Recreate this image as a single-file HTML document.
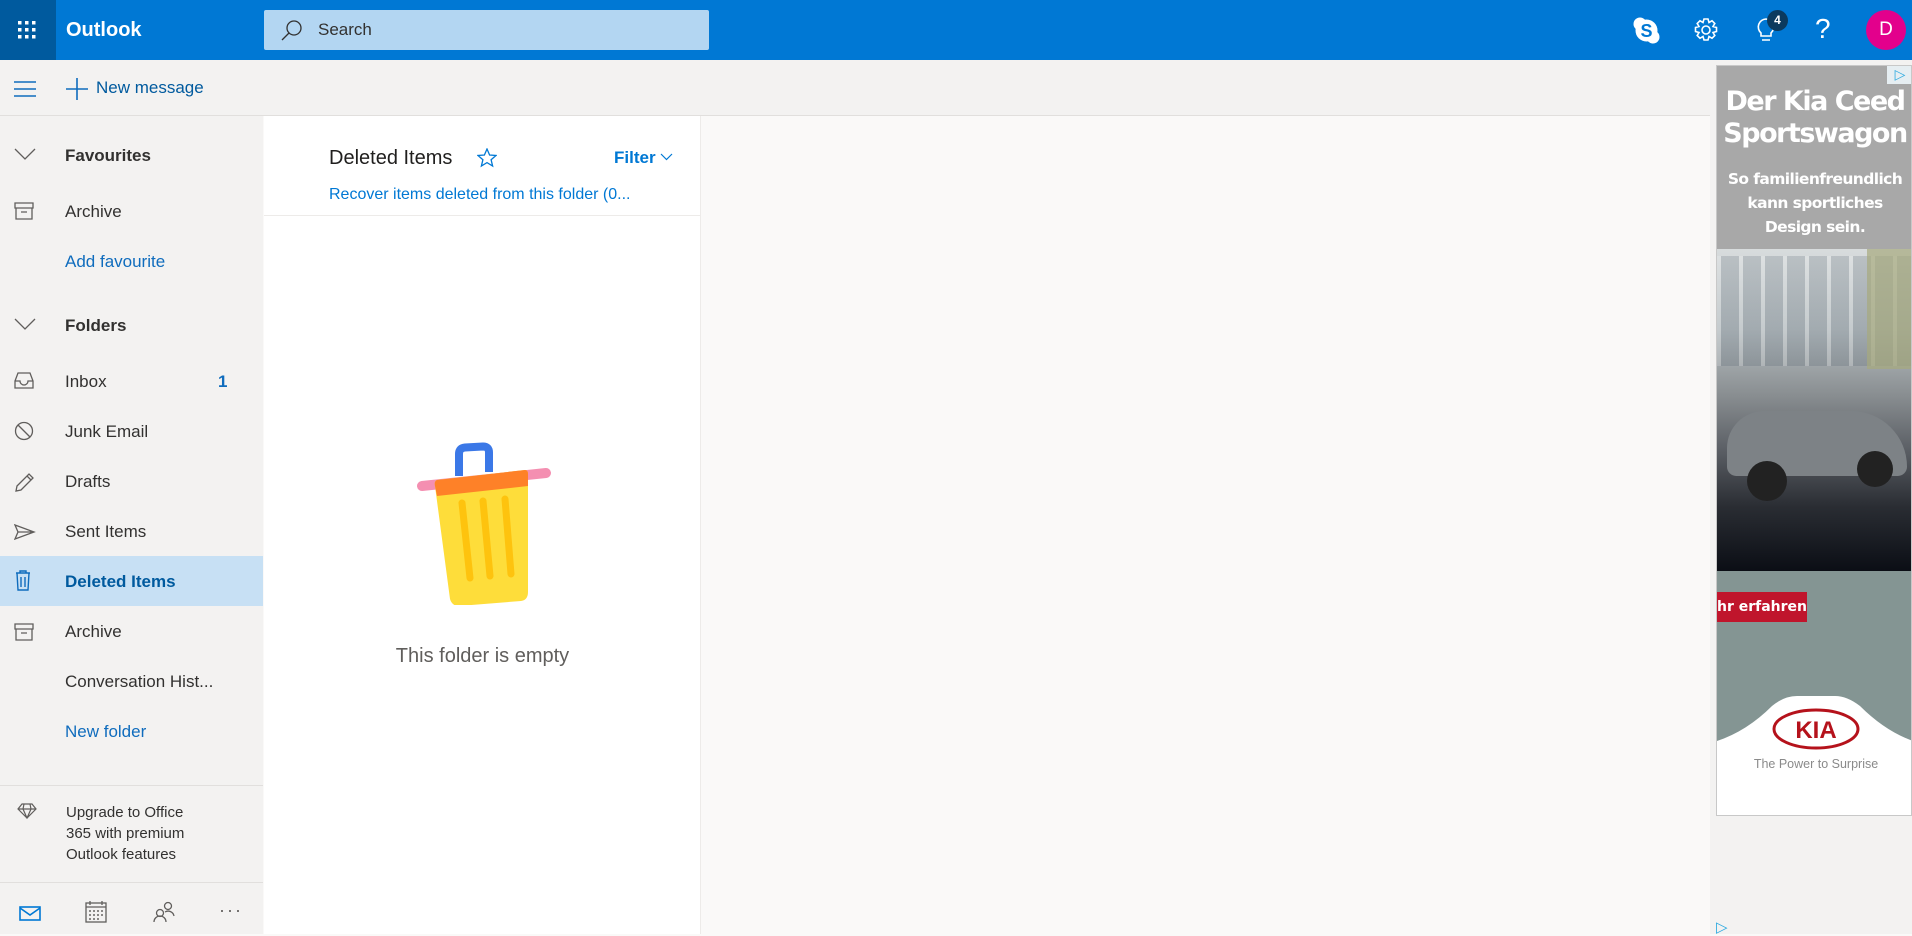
<!DOCTYPE html>
<html><head><meta charset="utf-8"><style>
*{margin:0;padding:0;box-sizing:border-box}
body{width:1912px;height:934px;overflow:hidden;background:#faf9f8;font-family:"Liberation Sans",sans-serif;position:relative;color:#323130}
.a{position:absolute}
.top{left:0;top:0;width:1912px;height:60px;background:#0078d4}
.waffle{left:0;top:0;width:56px;height:60px;background:#005a9e}
.nav{left:0;top:60px;width:263px;height:874px;background:#f3f2f1}
.tb{left:0;top:60px;width:1712px;height:56px;background:#f3f2f1;border-bottom:1px solid #e1dfdd}
.item{position:absolute;left:65px;font-size:17px;color:#323130;white-space:nowrap}
.ic{position:absolute;left:14px}
.blue{color:#0f6cbd}
</style></head><body>
<div class="a top"></div>
<div class="a waffle"></div>
<svg class="a" style="left:18px;top:21px" width="18" height="18"><g fill="#fff"><rect x="0" y="0" width="3.5" height="3.5"/><rect x="7" y="0" width="3.5" height="3.5"/><rect x="14" y="0" width="3.5" height="3.5"/><rect x="0" y="7" width="3.5" height="3.5"/><rect x="7" y="7" width="3.5" height="3.5"/><rect x="14" y="7" width="3.5" height="3.5"/><rect x="0" y="14" width="3.5" height="3.5"/><rect x="7" y="14" width="3.5" height="3.5"/><rect x="14" y="14" width="3.5" height="3.5"/></g></svg>
<div class="a" style="left:66px;top:19px;color:#fff;font-size:20px;font-weight:bold">Outlook</div>
<div class="a" style="left:264px;top:10px;width:445px;height:40px;background:#b3d6f2;border-radius:2px"></div>
<svg class="a" style="left:280px;top:18px" width="24" height="24"><circle cx="14" cy="10" r="7" fill="none" stroke="#323130" stroke-width="1.3"/><path d="M9 15 L2 22" stroke="#323130" stroke-width="1.3"/></svg>
<div class="a" style="left:318px;top:20px;font-size:17px;color:#323130">Search</div>
<!-- right icons -->
<svg class="a" style="left:1633px;top:17px" width="27" height="27"><circle cx="7" cy="7" r="6.5" fill="#fff"/><circle cx="20" cy="20" r="6.5" fill="#fff"/><circle cx="13.5" cy="13.5" r="11" fill="#fff"/><text x="13.5" y="20" text-anchor="middle" font-family="Liberation Sans" font-weight="bold" font-size="18" fill="#0078d4">S</text></svg>
<svg class="a" style="left:1693px;top:17px" width="26" height="26"><g fill="none" stroke="#fff" stroke-width="1.6"><circle cx="13" cy="13" r="4"/><path d="M11 2h4l1 3.5 3-1.8 2.8 2.8-1.8 3 3.5 1v4l-3.5 1 1.8 3-2.8 2.8-3-1.8-1 3.5h-4l-1-3.5-3 1.8-2.8-2.8 1.8-3-3.5-1v-4l3.5-1-1.8-3 2.8-2.8 3 1.8z"/></g></svg>
<svg class="a" style="left:1754px;top:16px" width="26" height="28"><path d="M12 3a8 8 0 0 0-5 14v3h10v-3a8 8 0 0 0-5-14z M8 24h8" fill="none" stroke="#fff" stroke-width="1.6"/></svg>
<div class="a" style="left:1767px;top:10px;width:21px;height:21px;border-radius:50%;background:#0b3a5e;color:#fff;font-size:12px;font-weight:bold;text-align:center;line-height:21px">4</div>
<div class="a" style="left:1815px;top:13px;color:#fff;font-size:28px;font-weight:300">?</div>
<div class="a" style="left:1866px;top:10px;width:40px;height:40px;border-radius:50%;background:#e3008c;color:#fff;font-size:19px;text-align:center;line-height:40px">D</div>
<!-- toolbar -->
<div class="a tb"></div>
<svg class="a" style="left:14px;top:81px" width="22" height="16"><path d="M0 1h22M0 8h22M0 15h22" stroke="#0f6cbd" stroke-width="1.4"/></svg>
<svg class="a" style="left:66px;top:78px" width="22" height="22"><path d="M11 0v22M0 11h22" stroke="#0f6cbd" stroke-width="1.6"/></svg>
<div class="a" style="left:96px;top:78px;font-size:17px;color:#005a9e">New message</div>
<!-- nav -->
<div class="a nav" style="top:116px;height:818px"></div>
<div class="a" style="left:0;top:556px;width:263px;height:50px;background:#c7e0f4"></div>
<svg class="ic" style="top:148px" width="22" height="14"><path d="M1 1l10 10 10-10" fill="none" stroke="#605e5c" stroke-width="1.3"/></svg>
<div class="item" style="top:146px;font-weight:bold">Favourites</div>
<svg class="ic" style="top:202px" width="20" height="18"><path d="M1 1h18v5H1zM2 6v11h16V6M7 10h6" fill="none" stroke="#605e5c" stroke-width="1.3"/></svg>
<div class="item" style="top:202px">Archive</div>
<div class="item blue" style="top:252px">Add favourite</div>
<svg class="ic" style="top:318px" width="22" height="14"><path d="M1 1l10 10 10-10" fill="none" stroke="#605e5c" stroke-width="1.3"/></svg>
<div class="item" style="top:316px;font-weight:bold">Folders</div>
<svg class="ic" style="top:372px" width="20" height="18"><path d="M1 9l3-8h12l3 8v7H1zM1 9h5a4 4 0 0 0 8 0h5" fill="none" stroke="#605e5c" stroke-width="1.3"/></svg>
<div class="item" style="top:372px">Inbox</div>
<div class="a" style="left:218px;top:372px;font-size:17px;font-weight:bold;color:#0f6cbd">1</div>
<svg class="ic" style="top:421px" width="22" height="22"><circle cx="10" cy="10" r="8.5" fill="none" stroke="#605e5c" stroke-width="1.3"/><path d="M4 4l12 12" stroke="#605e5c" stroke-width="1.3"/></svg>
<div class="item" style="top:422px">Junk Email</div>
<svg class="ic" style="top:471px" width="22" height="22"><path d="M2 20l1-5L15 3l4 4L7 19zM13 5l4 4" fill="none" stroke="#605e5c" stroke-width="1.3"/></svg>
<div class="item" style="top:472px">Drafts</div>
<svg class="ic" style="top:524px" width="22" height="16"><path d="M1 1l19 7-19 7 3-7zM4 8h16" fill="none" stroke="#605e5c" stroke-width="1.3"/></svg>
<div class="item" style="top:522px">Sent Items</div>
<svg class="ic" style="top:570px" width="20" height="22"><path d="M2 3h14M6 3V1h6v2M3 3l1 17h10l1-17M7 7v10M11 7v10" fill="none" stroke="#0f6cbd" stroke-width="1.4"/></svg>
<div class="item" style="top:572px;color:#005a9e;font-weight:bold">Deleted Items</div>
<svg class="ic" style="top:623px" width="20" height="18"><path d="M1 1h18v5H1zM2 6v11h16V6M7 10h6" fill="none" stroke="#605e5c" stroke-width="1.3"/></svg>
<div class="item" style="top:622px">Archive</div>
<div class="item" style="top:672px">Conversation Hist...</div>
<div class="item blue" style="top:722px">New folder</div>
<div class="a" style="left:0;top:785px;width:263px;height:1px;background:#e1dfdd"></div>
<svg class="a" style="left:17px;top:803px" width="20" height="16"><path d="M5 1h10l4 5-9 9-9-9zM1 6h18M7 1L6 6l4 9 4-9-1-5" fill="none" stroke="#605e5c" stroke-width="1.2"/></svg>
<div class="a" style="left:66px;top:802px;font-size:15px;line-height:21px;color:#323130">Upgrade to Office<br>365 with premium<br>Outlook features</div>
<div class="a" style="left:0;top:882px;width:263px;height:1px;background:#e1dfdd"></div>
<svg class="a" style="left:19px;top:906px" width="22" height="16"><rect x="1" y="1" width="20" height="13" fill="none" stroke="#0078d4" stroke-width="1.6"/><path d="M1 2l10 7 10-7" fill="none" stroke="#0078d4" stroke-width="1.6"/></svg>
<svg class="a" style="left:85px;top:901px" width="22" height="22"><rect x="1" y="2" width="20" height="19" fill="none" stroke="#605e5c" stroke-width="1.3"/><path d="M1 6h20M5 0v4M17 0v4" stroke="#605e5c" stroke-width="1.3"/><g fill="#8a8886"><rect x="4" y="9" width="2" height="2"/><rect x="8" y="9" width="2" height="2"/><rect x="12" y="9" width="2" height="2"/><rect x="16" y="9" width="2" height="2"/><rect x="4" y="13" width="2" height="2"/><rect x="8" y="13" width="2" height="2"/><rect x="12" y="13" width="2" height="2"/><rect x="16" y="13" width="2" height="2"/><rect x="4" y="17" width="2" height="2"/><rect x="8" y="17" width="2" height="2"/><rect x="12" y="17" width="2" height="2"/></g></svg>
<svg class="a" style="left:153px;top:901px" width="22" height="22"><g fill="none" stroke="#605e5c" stroke-width="1.3"><circle cx="7" cy="12" r="3.5"/><path d="M1 21a6 6 0 0 1 12 0"/><circle cx="15" cy="5" r="3.5"/><path d="M12 11a6 6 0 0 1 9 4"/></g></svg>
<div class="a" style="left:219px;top:900px;font-size:18px;color:#605e5c;letter-spacing:2px">···</div>
<!-- list panel -->
<div class="a" style="left:264px;top:116px;width:437px;height:818px;background:#fff;border-right:1px solid #edebe9"></div>
<div class="a" style="left:329px;top:147px;font-size:20px;color:#201f1e">Deleted Items</div>
<svg class="a" style="left:477px;top:148px" width="20" height="20"><path d="M10 1l2.6 6 6.4.5-4.9 4.2 1.5 6.3L10 14.6 4.4 18l1.5-6.3L1 7.5l6.4-.5z" fill="none" stroke="#0078d4" stroke-width="1.3"/></svg>
<div class="a" style="left:614px;top:148px;font-size:17px;font-weight:bold;color:#0078d4">Filter</div>
<svg class="a" style="left:660px;top:153px" width="13" height="8"><path d="M1 1l5.5 5.5L12 1" fill="none" stroke="#0078d4" stroke-width="1.2"/></svg>
<div class="a" style="left:329px;top:186px;font-size:16px;color:#0078d4;white-space:nowrap">Recover items deleted from this folder (0...</div>
<div class="a" style="left:264px;top:215px;width:437px;height:1px;background:#edebe9"></div>
<svg class="a" style="left:410px;top:440px" width="150" height="165">
<path d="M49 36V14q0-6 6-6.5l18-1q6 0 6 6V32" fill="none" stroke="#3b78e7" stroke-width="8" stroke-linejoin="round"/>
<path d="M12 46l124-13" stroke="#f48fb1" stroke-width="10" stroke-linecap="round"/>
<path d="M27 40l88-10q3 0 3 4v118q0 8-7 9l-62 5q-7 0-9-7L25 46q-1-5 2-6z" fill="#fedd3a"/>
<path d="M27 40l88-10q3 0 3 4v12l-91 10-2-10q-1-5 2-6z" fill="#fe8128"/>
<path d="M52 63l8 75M73 61l7 75M95 59l6 75" stroke="#fec30e" stroke-width="7" stroke-linecap="round"/>
</svg>
<div class="a" style="left:264px;width:437px;top:645px;text-align:center;font-size:20px;color:#605e5c;font-weight:300">This folder is empty</div>
<!-- right rail & ad -->
<div class="a" style="left:1710px;top:60px;width:202px;height:874px;background:#f3f2f1"></div>
<div class="a" style="left:1716px;top:65px;width:196px;height:751px;background:#fff;border:1px solid #c8c8c8;overflow:hidden">
 <div class="a" style="left:0;top:0;width:196px;height:183px;background:#a8a8a8"></div>
 <div class="a" style="left:0;top:20px;width:196px;text-align:center;color:#fff;font-weight:bold;font-size:27px;line-height:32px;font-family:'DejaVu Sans',sans-serif;letter-spacing:-1.5px">Der Kia Ceed<br>Sportswagon</div>
 <div class="a" style="left:0;top:101px;width:196px;text-align:center;color:#fff;font-weight:bold;font-size:15.5px;line-height:24px;font-family:'DejaVu Sans',sans-serif;letter-spacing:-0.6px">So familienfreundlich<br>kann sportliches<br>Design sein.</div>
 <div class="a" style="left:170px;top:0;width:26px;height:18px;background:#e6eef2;color:#2aa9e0;font-size:14px;text-align:center">▷</div>
 <div class="a" style="left:0;top:183px;width:196px;height:322px;background:linear-gradient(180deg,#d8dcdd 0%,#b9c0c3 25%,#8a8f92 45%,#5c6066 62%,#2a2d33 80%,#0b0e15 100%)"></div>
 <div class="a" style="left:0;top:190px;width:196px;height:110px;background:repeating-linear-gradient(90deg,rgba(255,255,255,.3) 0 4px,rgba(60,75,90,.3) 4px 22px);opacity:.6"></div>
 <div class="a" style="left:150px;top:183px;width:46px;height:120px;background:#a7a97e;opacity:.7"></div>
 <div class="a" style="left:10px;top:345px;width:180px;height:65px;background:#7d8286;border-radius:40px 60px 10px 10px"></div>
 <div class="a" style="left:30px;top:395px;width:40px;height:40px;background:#222;border-radius:50%"></div>
 <div class="a" style="left:140px;top:385px;width:36px;height:36px;background:#222;border-radius:50%"></div>
 <div class="a" style="left:0;top:505px;width:196px;height:246px;background:#849593"></div>
 <div class="a" style="left:0;top:526px;width:90px;height:30px;background:#c0152c;color:#fff;font-weight:bold;font-size:14px;line-height:30px;font-family:'DejaVu Sans',sans-serif">hr erfahren</div>
 <svg class="a" style="left:0;top:625px" width="196" height="126"><path d="M0 50q30-10 55-35q12-10 25-10h38q12 0 25 10q25 25 53 35v76H0z" fill="#fff"/>
 <ellipse cx="99" cy="38" rx="42" ry="19" fill="none" stroke="#b5121b" stroke-width="3"/>
 <text x="99" y="47" text-anchor="middle" font-family="Liberation Sans" font-weight="bold" font-size="24" fill="#b5121b">KIA</text>
 <text x="99" y="77" text-anchor="middle" font-family="Liberation Sans" font-size="12.5" fill="#8a8a8a">The Power to Surprise</text></svg>
</div>
<div class="a" style="left:1716px;top:918px;color:#2aa9e0;font-size:15px">▷</div>
</body></html>
